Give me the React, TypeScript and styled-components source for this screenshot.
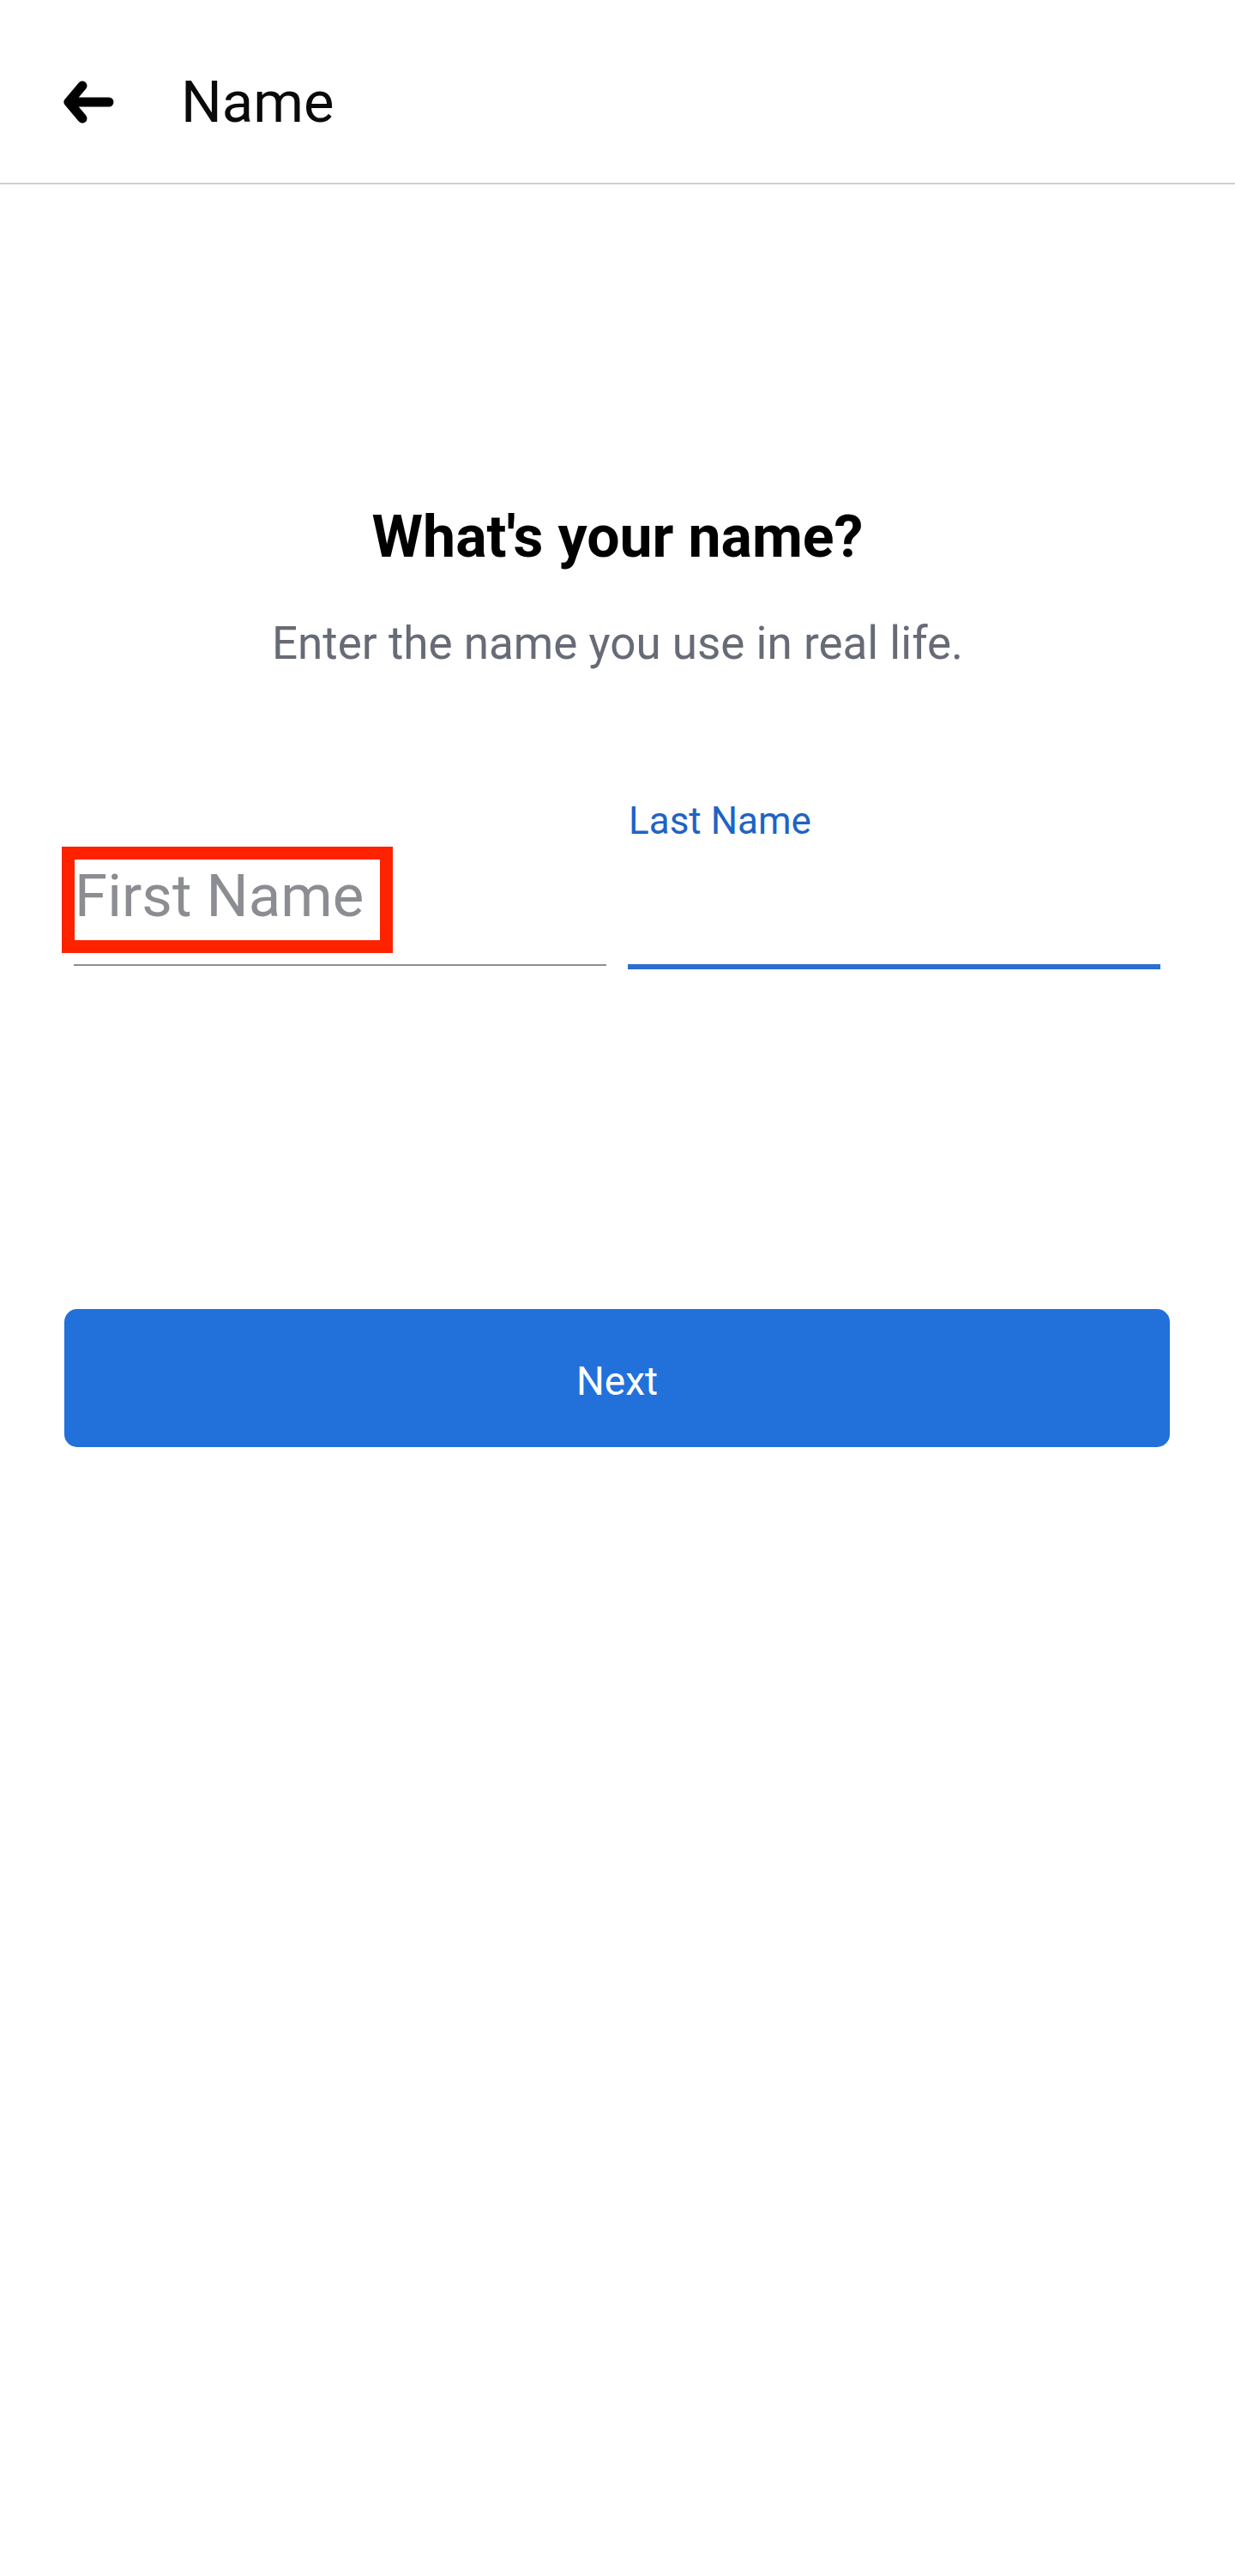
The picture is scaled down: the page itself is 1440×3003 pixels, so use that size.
import React from "react";
import styled, { createGlobalStyle } from "styled-components";

const Global = createGlobalStyle`
  html, body { margin: 0; padding: 0; background: #ffffff; }
  body { font-family: Roboto, "Noto Sans", Arial, sans-serif; -webkit-font-smoothing: antialiased; }
  * { box-sizing: border-box; }
`;

const Page = styled.div`
  width: 1440px;
  min-height: 3003px;
  background: #ffffff;
  display: flex;
  flex-direction: column;
`;

const Header = styled.header`
  height: 215px;
  padding-top: 26px;
  display: flex;
  align-items: center;
  border-bottom: 2px solid #cfcfcf;
`;

const BackButton = styled.button`
  width: 62px;
  height: 54px;
  margin-left: 72px;
  padding: 0;
  border: none;
  background: transparent;
  display: flex;
  align-items: center;
  justify-content: center;
`;

const HeaderTitle = styled.h1`
  margin: 0 0 0 77px;
  font-family: Roboto, sans-serif;
  font-weight: 400;
  font-size: 67px;
  line-height: 1;
  color: #0a0a0a;
`;

const Main = styled.main`
  display: flex;
  flex-direction: column;
  align-items: center;
  padding-top: 372px;
`;

const Title = styled.h2`
  margin: 0;
  font-family: Roboto, sans-serif;
  font-weight: 700;
  font-size: 68px;
  line-height: 79px;
  color: #000000;
  text-align: center;
`;

const Subtitle = styled.p`
  margin: 53px 0 0;
  font-family: Roboto, sans-serif;
  font-weight: 400;
  font-size: 53px;
  line-height: 62px;
  color: #676b76;
  text-align: center;
`;

const Fields = styled.div`
  width: 100%;
  margin-top: 149px;
  padding: 0 87px 0 86px;
  display: grid;
  grid-template-columns: 1fr 1fr;
  column-gap: 25px;
  align-items: start;
`;

const Field = styled.div<{ $focused?: boolean }>`
  display: flex;
  flex-direction: column;
  border-bottom: ${(p) => (p.$focused ? "6px solid #2d6fcf" : "2px solid #8f8f8f")};
`;

const FieldLabel = styled.label<{ $hidden?: boolean }>`
  height: 54px;
  padding-left: 1px;
  font-family: Roboto, sans-serif;
  font-size: 44px;
  line-height: 54px;
  color: #1f63c4;
  visibility: ${(p) => (p.$hidden ? "hidden" : "visible")};
`;

const InputWrap = styled.div`
  position: relative;
  padding: 21px 0 39px 1px;
  height: 140px;
`;

const TextInput = styled.input`
  width: 100%;
  height: 80px;
  border: none;
  outline: none;
  padding: 0;
  background: transparent;
  font-family: Roboto, sans-serif;
  font-size: 69px;
  line-height: 80px;
  color: #111;
  &::placeholder { color: #8b8d92; }
`;

const Highlight = styled.div`
  position: absolute;
  left: -14px;
  top: 3px;
  width: 386px;
  height: 124px;
  border: 15px solid #ff2200;
  pointer-events: none;
`;

const NextButton = styled.button`
  align-self: stretch;
  margin: 396px 76px 0 75px;
  height: 161px;
  padding: 6px 0 0;
  border: none;
  border-radius: 15px;
  background: #2271db;
  color: #ffffff;
  font-family: Roboto, sans-serif;
  font-size: 46px;
  font-weight: 400;
`;

const BackArrow = () => (
  <svg width="62" height="54" viewBox="0 0 62 54" fill="none">
    <path
      d="M8 26H55M24 7L8 26L24 45"
      stroke="#000"
      strokeWidth="11"
      strokeLinecap="round"
      strokeLinejoin="round"
    />
  </svg>
);

export default function App() {
  return (
    <>
      <Global />
      <Page>
        <Header>
          <BackButton aria-label="Back">
            <BackArrow />
          </BackButton>
          <HeaderTitle>Name</HeaderTitle>
        </Header>
        <Main>
          <Title>What's your name?</Title>
          <Subtitle>Enter the name you use in real life.</Subtitle>
          <Fields>
            <Field>
              <FieldLabel $hidden>First Name</FieldLabel>
              <InputWrap>
                <TextInput placeholder="First Name" />
                <Highlight />
              </InputWrap>
            </Field>
            <Field $focused>
              <FieldLabel>Last Name</FieldLabel>
              <InputWrap>
                <TextInput />
              </InputWrap>
            </Field>
          </Fields>
          <NextButton>Next</NextButton>
        </Main>
      </Page>
    </>
  );
}
